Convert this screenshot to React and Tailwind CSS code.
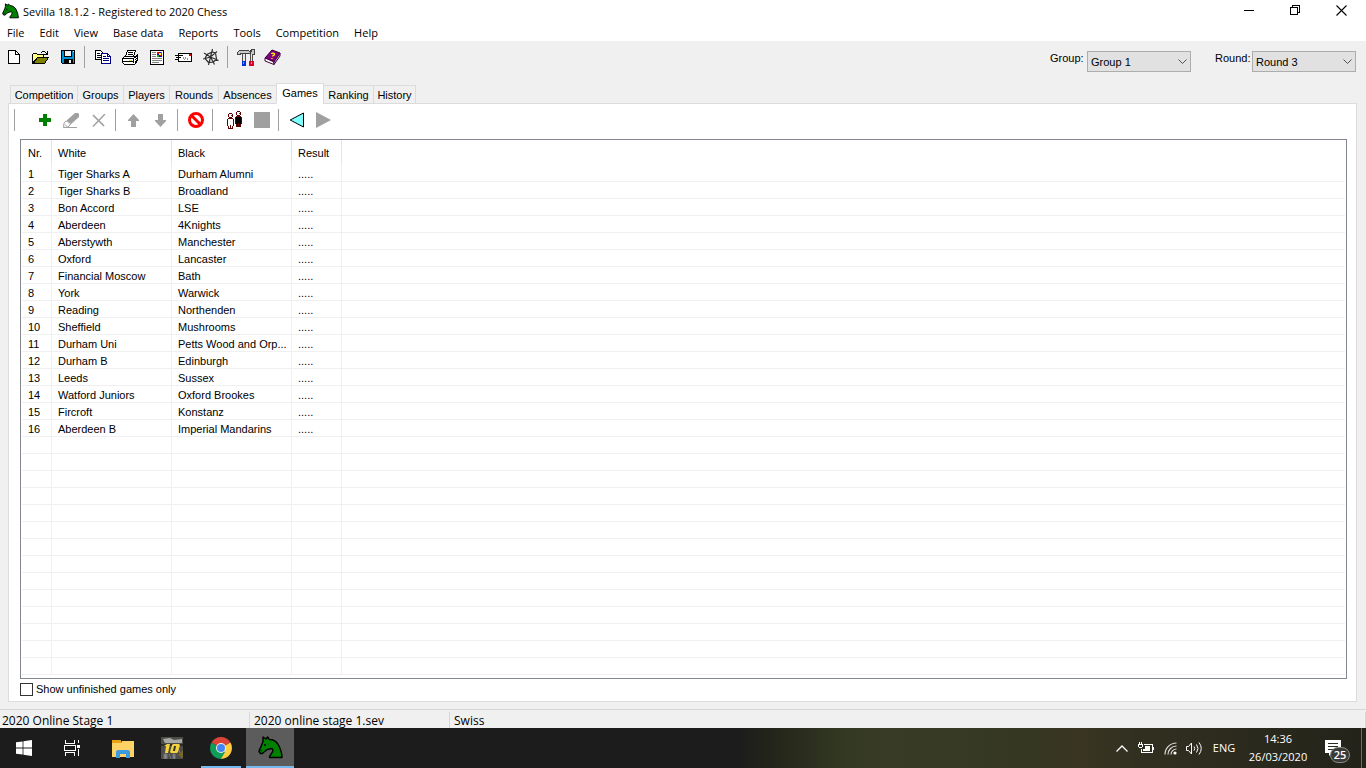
import React, { useState } from "react";

const menuItems = [
  "File",
  "Edit",
  "View",
  "Base data",
  "Reports",
  "Tools",
  "Competition",
  "Help",
];

const tabs = [
  { name: "Competition", width: "w-[68px]" },
  { name: "Groups", width: "w-[47px]" },
  { name: "Players", width: "w-[47px]" },
  { name: "Rounds", width: "w-[50px]" },
  { name: "Absences", width: "w-[59px]" },
  { name: "Games", width: "w-[48px]" },
  { name: "Ranking", width: "w-[51px]" },
  { name: "History", width: "w-[43px]" },
];

const games = [
  ["Tiger Sharks A", "Durham Alumni"],
  ["Tiger Sharks B", "Broadland"],
  ["Bon Accord", "LSE"],
  ["Aberdeen", "4Knights"],
  ["Aberstywth", "Manchester"],
  ["Oxford", "Lancaster"],
  ["Financial Moscow", "Bath"],
  ["York", "Warwick"],
  ["Reading", "Northenden"],
  ["Sheffield", "Mushrooms"],
  ["Durham Uni", "Petts Wood and Orp..."],
  ["Durham B", "Edinburgh"],
  ["Leeds", "Sussex"],
  ["Watford Juniors", "Oxford Brookes"],
  ["Fircroft", "Konstanz"],
  ["Aberdeen B", "Imperial Mandarins"],
];

// The grid lines go on below the last game
const emptyRows = Array.from({ length: 14 });

const Knight = ({ className }) => (
  <svg viewBox="0 0 25 23" className={className}>
    <path
      d="M5 1l3 2 1.500-2 2 2.500c4 0 7 2 9 5.500 2 4 3.500 8 3.500 12.500H11.500c0-3 3-4 3.500-7l-1-2c-2 .8-4 .3-5.500 1.500-1.500 1.500-3 2-4 3.500H2.500L1 15.500c0-2 1.500-3 2-5C3.500 8.500 5 7 5 5z"
      fill="#008000"
      stroke="#000"
      strokeWidth="1.400"
      strokeLinejoin="round"
    />
    <path d="M6 9h2M2.500 14.500h1" stroke="#000" strokeWidth="1.300" />
  </svg>
);

const NewIcon = () => (
  <svg width="12" height="14" viewBox="0 0 12 14" shapeRendering="crispEdges">
    <path d="M.5.5h7l4 4v9H.5z" fill="#fff" stroke="#000" />
    <path d="M7.500.5v4h4" fill="none" stroke="#000" />
  </svg>
);

const OpenIcon = () => (
  <svg width="17" height="14" viewBox="0 0 17 14" shapeRendering="crispEdges">
    <path d="M.5 13V4.500l1-1h3l1 1h6v3h-6z" fill="#ffff80" stroke="#000" />
    <path d="M1.500 13.500l4-6h11l-4 6z" fill="#808000" stroke="#000" />
    <path
      d="M9 2h1V1h3v1h1v1h1V1h1v4h-4V4h2V3h-1V2h-3v1H9z"
      fill="#000"
    />
  </svg>
);

const SaveIcon = () => (
  <svg width="14" height="14" viewBox="0 0 14 14" shapeRendering="crispEdges">
    <path d="M0 0h14v14H1l-1-1z" fill="#000" />
    <path d="M1 1h12v12H1z" fill="#0094d4" />
    <path d="M3 0h8v7H3zM3 9h9v5H3z" fill="#000" />
    <path d="M4 1h6v5H4zM8 10h2v3H8zM12 1h1v1h-1z" fill="#f0f0f0" />
  </svg>
);

const CopyIcon = () => (
  <svg width="16" height="14" viewBox="0 0 16 14" shapeRendering="crispEdges">
    <path d="M.5.5h5l2 2v7h-7z" fill="#fff" stroke="#000" />
    <path d="M2 3.500h3M2 5.500h4M2 7.500h4" stroke="#000" />
    <path d="M6.500 3.500h6l3 3v7h-9z" fill="#fff" stroke="#000080" />
    <path d="M12.500 3.500v3h3" fill="none" stroke="#000080" />
    <path d="M8 6.500h3M8 8.500h6M8 10.500h6" stroke="#000080" />
  </svg>
);

const PrintIcon = () => (
  <svg width="16" height="15" viewBox="0 0 16 15" shapeRendering="crispEdges">
    <path d="M3.500 6.500l2-6h8l-2 6z" fill="#fff" stroke="#000" />
    <path d="M6 2.500h5M5.500 4.500h5" stroke="#000" />
    <path d="M.5 8.500l2-2h11l2-2v6l-3 4H2.500l-2-2z" fill="#fff" stroke="#000" />
    <path d="M.5 8.500h11v4M1 11.500h11M11.500 8.500l4-3" fill="none" stroke="#000" />
    <path d="M13 7h1v1h-1zM14 8h1v1h-1zM13 9h1v1h-1zM14 10h1v1h-1zM13 11h1v1h-1z" fill="#000" />
    <path d="M7 10h3v1H7z" fill="#e0e000" />
  </svg>
);

const PreviewIcon = () => (
  <svg width="14" height="15" viewBox="0 0 14 15" shapeRendering="crispEdges">
    <path d="M.5.5h13v14H.5z" fill="#fff" stroke="#000" />
    <path
      d="M2 2.500h4M2 4.500h4M2 6.500h4M2 8.500h10M2 10.500h10M2 12.500h7"
      stroke="#808080"
    />
    <path d="M7 2h5v5H7z" fill="#0000ff" />
    <path d="M7 2h2v2H7zM10 4h2v2h-2z" fill="#ff0000" />
    <path d="M9 3h2v2H9z" fill="#ffff00" />
    <path d="M7 5h2v2H7z" fill="#00c000" />
    <path d="M11 2h1v2h-1z" fill="#ff00ff" />
  </svg>
);

const MailIcon = () => (
  <svg width="17" height="11" viewBox="0 0 17 11" shapeRendering="crispEdges">
    <path d="M3.500 1.500h13v8h-13z" fill="#fff" stroke="#000" />
    <path d="M0 3.500h8M1 5.500h5M0 7.500h4" stroke="#000" />
    <path d="M8 5h1v2H8zM9 7h1v1H9zM10 5h1v2h-1zM12 6h1v2h-1z" fill="#909090" />
    <path d="M14 2h2v2h-2z" fill="#e00000" />
  </svg>
);

const WebIcon = () => (
  <svg width="16" height="16" viewBox="0 0 16 16">
    <path
      d="M9.500 0L7.500 8l-2 8M1 4l6.500 4 8 3.500M0 10l7.500-2L14 2.500M7.500 8l4 7.500M9 3L4 5.500 2 9.500 5.500 13.500l5-.5 3-3L12.500 4z"
      fill="none"
      stroke="#303030"
      strokeWidth="1.200"
    />
  </svg>
);

const ToolsIcon = () => (
  <svg width="18" height="17" viewBox="0 0 18 17" shapeRendering="crispEdges">
    <path d="M0 3l2-2h9l2 2 1-3h4v6h-4l-1-1H5L3 6H0z" fill="#404040" />
    <path d="M1 3l2-1h8l2 2 2-2V1h2v4h-2l-2-1H4L2 5H1z" fill="#c8c8c8" />
    <path d="M5 5h4v7H5zM13 5h3v7h-3z" fill="#505050" />
    <path d="M6 5h2v7H6zM14 5h1v7h-1z" fill="#e8e8e8" />
    <path d="M5 12h4v5H5z" fill="#0030e0" />
    <path d="M12 12h5v5h-5z" fill="#e0002c" />
    <path d="M6 13h1v2H6z" fill="#60b0ff" />
    <path d="M14 13h1v2h-1z" fill="#ff90a0" />
  </svg>
);

const BookIcon = () => (
  <svg width="17" height="16" viewBox="0 0 17 16">
    <path d="M1 9l7-8 8 3-6 9z" fill="#800080" stroke="#300030" />
    <path d="M1 9v3l9 3.500V13z" fill="#fff" stroke="#400040" />
    <path d="M10 13l6-9v3l-6 8.500z" fill="#d0b0d0" stroke="#400040" />
    <path
      d="M7.500 5c.5-1.500 3.500-1 3 .5-.3 1-1.800.8-2 2M8 9v1"
      fill="none"
      stroke="#ffff00"
      strokeWidth="1.300"
    />
  </svg>
);

const PlusIcon = () => (
  <svg width="12" height="12" viewBox="0 0 12 12" shapeRendering="crispEdges">
    <path d="M4 0h4v4h4v4H8v4H4V8H0V4h4z" fill="#008000" />
  </svg>
);

const PencilIcon = () => (
  <svg width="17" height="17" viewBox="0 0 17 17">
    <path d="M3 9L12 1h3l1 1v3l-9 8z" fill="#a0a0a0" />
    <path d="M3 9l-2 2-.5 4.500L5 15l2.500-2.500" fill="none" stroke="#a0a0a0" />
    <path d="M2 12.500l2 2M1 15.500h13" stroke="#a0a0a0" fill="none" />
    <path d="M4 10l3 2" stroke="#fff" />
  </svg>
);

const DeleteIcon = () => (
  <svg width="14" height="13" viewBox="0 0 14 13">
    <path d="M1 1l11 11" stroke="#a0a0a0" strokeWidth="1.700" />
    <path d="M13 0L1 12.500" stroke="#a0a0a0" strokeWidth="1.400" />
  </svg>
);

const ArrowIcon = ({ down }) => (
  <svg
    width="11"
    height="13"
    viewBox="0 0 11 13"
    className={down ? "rotate-180" : ""}
  >
    <path d="M5.500 0L11 6v1H8v6H3V7H0V6z" fill="#a0a0a0" />
  </svg>
);

const ForbidIcon = () => (
  <svg width="16" height="16" viewBox="0 0 16 16">
    <circle cx="8" cy="8" r="6.500" fill="#fff" stroke="#f00" strokeWidth="3" />
    <path d="M3.500 3.500l9 9" stroke="#f00" strokeWidth="3" />
  </svg>
);

// White and black player side by side
const PlayersIcon = () => (
  <svg width="15" height="18" viewBox="0 0 15 18" shapeRendering="crispEdges">
    <path d="M9 5h5v1h1v7h-1v3H9v-3H8V6h1z" fill="#600000" />
    <path d="M9 6h5v7h-1v2h-1v-3h-1v3h-1v-2H9z" fill="#000" />
    <path d="M10 0h3v1h1v3h-1v1h-3V4H9V1h1z" fill="#600000" />
    <path d="M10 1h3v3h-3z" fill="#fff" />
    <path d="M1 7h5v1h1v7H6v3H1v-3H0V8h1z" fill="#600000" />
    <path d="M1 8h5v7H5v2H4v-3H3v3H2v-2H1z" fill="#fff" />
    <path d="M2 2h3v1h1v3H5v1H2V6H1V3h1z" fill="#600000" />
    <path d="M2 3h3v3H2z" fill="#fff" />
    <path d="M4 4h1v1H4zM12 2h1v1h-1z" fill="#c000c0" />
  </svg>
);

const StopIcon = () => (
  <svg width="16" height="16" viewBox="0 0 16 16">
    <path d="M0 0h16v16H0z" fill="#a0a0a0" />
  </svg>
);

const PreviousIcon = () => (
  <svg width="16" height="16" viewBox="0 0 16 16">
    <path d="M1.200 8L14.500 1v14z" fill="#80ffff" stroke="#000" />
  </svg>
);

const NextIcon = () => (
  <svg width="16" height="16" viewBox="0 0 16 16">
    <path d="M0 0l15 8-15 8z" fill="#a0a0a0" />
  </svg>
);

const ToolButton = ({ label, disabled, children }) => (
  <button
    type="button"
    aria-label={label}
    disabled={disabled}
    className="w-[27px] h-7 flex items-center justify-center shrink-0"
  >
    {children}
  </button>
);

const Separator = ({ className = "ml-[3px] mr-1 bg-[#a0a0a0]" }) => (
  <div className={`w-px h-[22px] shrink-0 ${className}`}></div>
);

const TitleBar = () => (
  <header className="h-6 flex items-center bg-white pl-0.5 text-[11px]">
    <Knight className="w-[17px] h-4 mr-1 mb-0.5" />
    <h1 className="flex-1">Sevilla 18.1.2 - Registered to 2020 Chess</h1>
    <div className="flex self-start pr-0.5">
      <button type="button" aria-label="Minimize" className="w-[46px] h-5 flex items-center justify-center">
        <svg width="10" height="10" viewBox="0 0 10 10" shapeRendering="crispEdges">
          <path d="M0 5.500h10" stroke="#000" />
        </svg>
      </button>
      <button type="button" aria-label="Restore" className="w-[46px] h-5 flex items-center justify-center">
        <svg width="10" height="10" viewBox="0 0 10 10" shapeRendering="crispEdges">
          <path d="M.5 2.500h7v7h-7zM2.500 2.500v-2h7v7h-2" fill="none" stroke="#000" />
        </svg>
      </button>
      <button type="button" aria-label="Close" className="w-[46px] h-5 flex items-center justify-center">
        <svg width="11" height="11" viewBox="0 0 11 11">
          <path d="M.5.5l10 10M10.500.5l-10 10" stroke="#000" strokeWidth="1.100" />
        </svg>
      </button>
    </div>
  </header>
);

const PickList = ({ id, label, value }) => (
  <div className="flex items-start gap-px">
    <label htmlFor={id} className="w-9 leading-[14px]">
      {label}
    </label>
    <div className="relative w-[104px]">
      <select
        id={id}
        defaultValue={value}
        className="appearance-none block w-full h-[21px] pt-px pl-[3px] bg-[#e1e1e1] border border-[#adadad] text-black"
      >
        <option>{value}</option>
      </select>
      <svg
        viewBox="0 0 9 5"
        className="absolute right-1 top-2 w-[9px] h-[5px] pointer-events-none"
      >
        <path d="M.5.5l4 4 4-4" fill="none" stroke="#505050" />
      </svg>
    </div>
  </div>
);

const MainToolbar = () => (
  <div className="flex items-start justify-between pt-[2px] h-[42px]">
    <div className="flex items-center">
      <ToolButton label="New"><NewIcon /></ToolButton>
      <ToolButton label="Open"><OpenIcon /></ToolButton>
      <ToolButton label="Save"><SaveIcon /></ToolButton>
      <Separator />
      <ToolButton label="Copy"><CopyIcon /></ToolButton>
      <ToolButton label="Print"><PrintIcon /></ToolButton>
      <ToolButton label="Preview"><PreviewIcon /></ToolButton>
      <ToolButton label="Mail"><MailIcon /></ToolButton>
      <ToolButton label="Web"><WebIcon /></ToolButton>
      <Separator />
      <ToolButton label="Options"><ToolsIcon /></ToolButton>
      <ToolButton label="Help"><BookIcon /></ToolButton>
    </div>
    <div className="flex gap-6 pt-2 pr-[10px]">
      <PickList id="group" label="Group:" value="Group 1" />
      <PickList id="round" label="Round:" value="Round 3" />
    </div>
  </div>
);

const GamesToolbar = () => (
  <div className="flex items-center pt-[2px] pl-[5px]">
    <Separator className="mr-4 bg-[#a0a0a0]" />
    <ToolButton label="Add"><PlusIcon /></ToolButton>
    <ToolButton label="Edit" disabled><PencilIcon /></ToolButton>
    <ToolButton label="Delete" disabled><DeleteIcon /></ToolButton>
    <Separator />
    <ToolButton label="Move up" disabled><ArrowIcon /></ToolButton>
    <ToolButton label="Move down" disabled><ArrowIcon down /></ToolButton>
    <Separator />
    <ToolButton label="Clear"><ForbidIcon /></ToolButton>
    <Separator className="ml-[3px] mr-2 bg-[#a0a0a0]" />
    <ToolButton label="Pair players"><PlayersIcon /></ToolButton>
    <ToolButton label="Stop" disabled><StopIcon /></ToolButton>
    <Separator />
    <ToolButton label="Previous round"><PreviousIcon /></ToolButton>
    <ToolButton label="Next round" disabled><NextIcon /></ToolButton>
  </div>
);

const GamesTable = () => {
  const head = "h-[25px] pt-px pl-[6px] font-normal border-r border-[#e5e5e5]";
  const cell = "h-[17px] pt-[2px] pl-[6px] border-r border-b border-[#f0f0f0]";

  return (
    <div className="flex-1 min-h-0 overflow-hidden ml-[11px] mr-[9px] pl-px pr-px border border-[#828790]">
      <table className="w-full table-fixed border-separate border-spacing-0 text-left leading-[14px] whitespace-nowrap">
        <colgroup>
          <col className="w-[30px]" />
          <col className="w-[120px]" />
          <col className="w-[120px]" />
          <col className="w-[50px]" />
          <col />
        </colgroup>
        <thead>
          <tr>
            <th className={head}>Nr.</th>
            <th className={head}>White</th>
            <th className={head}>Black</th>
            <th className={head}>Result</th>
            <th></th>
          </tr>
        </thead>
        <tbody>
          {games.map(([white, black], index) => (
            <tr key={white}>
              <td className={cell}>{index + 1}</td>
              <td className={cell}>{white}</td>
              <td className={cell}>{black}</td>
              <td className={cell}>.....</td>
              <td className="border-b border-[#f0f0f0]"></td>
            </tr>
          ))}
          {emptyRows.map((_, index) => (
            <tr key={index}>
              <td className={cell}></td>
              <td className={cell}></td>
              <td className={cell}></td>
              <td className={cell}></td>
              <td className="border-b border-[#f0f0f0]"></td>
            </tr>
          ))}
        </tbody>
      </table>
    </div>
  );
};

const StatusBar = () => (
  <footer className="h-[19px] flex border-t border-[#d7d7d7] pt-[2px] text-[12px] leading-[18px]">
    <div className="w-[250px] pl-0.5 border-r border-[#d7d7d7]">2020 Online Stage 1</div>
    <div className="w-[200px] pl-1 border-r border-[#d7d7d7]">2020 online stage 1.sev</div>
    <div className="flex-1 pl-1 border-r border-[#d7d7d7]">Swiss</div>
  </footer>
);

const TaskButton = ({ label, className = "w-[49px]", children }) => (
  <button
    type="button"
    aria-label={label}
    className={`h-full flex flex-col items-center shrink-0 ${className}`}
  >
    {children}
  </button>
);

const Taskbar = () => (
  <nav className="h-10 shrink-0 flex bg-[linear-gradient(90deg,#1c1c1c_0%,#1c1c1c_54%,#25271a_57%,#343924_62%,#383c25_65%,#353722_75%,#393522_79%,#302f20_84%,#24231a_100%)] text-white text-[11px]">
    <TaskButton label="Start" className="w-12 justify-center">
      <svg width="16" height="16" viewBox="0 0 16 16">
        <path d="M0 2.300L6.600 1.400v6.200H0zM7.400 1.300L16 0v7.600H7.400zM0 8.400h6.600v6.200L0 13.700zM7.400 8.400H16V16l-8.600-1.300z" fill="#fff" />
      </svg>
    </TaskButton>
    <TaskButton label="Task view" className="w-12 justify-center mr-[3px]">
      <svg width="16" height="16" viewBox="0 0 16 16" shapeRendering="crispEdges">
        <path d="M1.500 0v3.500h9V0M1.500 16v-3.500h9V16M.5 5.500h11v5H.5zM14.500 0v3M14.500 9v7" fill="none" stroke="#fff" />
        <path d="M13 5h3v3h-3z" fill="#fff" />
      </svg>
    </TaskButton>
    <TaskButton label="File Explorer" className="w-12 justify-center">
      <svg width="22" height="19" viewBox="0 0 22 19">
        <path d="M0 1h9v3H0z" fill="#e8a317" />
        <path d="M0 4h9l1-2h12v16H0z" fill="#fdd365" />
        <path d="M4 19v-7l2-1h10l2 1v7h-4v-4H8v4z" fill="#3c9be0" />
      </svg>
    </TaskButton>
    <TaskButton label="Game" className="w-[49px] justify-center">
      <svg width="22" height="22" viewBox="0 0 22 22">
        <path d="M0 0h22v22H0z" fill="#4c4c48" />
        <path d="M2 2l7-1 4 2 8-1v4H4z" fill="#a8a8a4" />
        <path d="M0 7h22v2H0z" fill="#2a2a2a" />
        <path d="M3 17h3v5H3zM8 17l2 5M12 17h2v5h-2zM18 13l3 8" fill="#888" stroke="#777" />
        <path d="M17 18l5-5v8z" fill="#76672b" />
        <path d="M6 7h3l-2 9H4l1-7H3z" fill="#f3d23c" />
        <path d="M11 8l1-1h6l1 1-2 7-1 1h-6l-1-1z" fill="#f3d23c" />
        <path d="M13 9h2l-1 5h-2z" fill="#333" />
      </svg>
    </TaskButton>
    <TaskButton label="Chrome" className="w-[49px] pt-[9px] justify-between">
      <svg width="22" height="22" viewBox="0 0 22 22">
        <path d="M11 11L1.500 5.500A11 11 0 0 1 20.500 5.500z" fill="#db4437" />
        <path d="M11 11L20.500 5.500A11 11 0 0 1 11 22z" fill="#ffcd40" />
        <path d="M11 11L1.500 5.500A11 11 0 0 0 11 22l4-7z" fill="#0f9d58" />
        <circle cx="11" cy="11" r="5" fill="#f1f1f1" />
        <circle cx="11" cy="11" r="4" fill="#4285f4" />
      </svg>
      <span className="w-10 h-[2px] bg-[#76b9ed]"></span>
    </TaskButton>
    <TaskButton label="Sevilla" className="w-12 ml-px pt-2 justify-between bg-[#5c5c5c]">
      <Knight className="w-[25px] h-[23px]" />
      <span className="w-full h-[2px] bg-[#76b9ed]"></span>
    </TaskButton>

    <div className="ml-auto flex items-center">
      <button type="button" aria-label="Show hidden icons" className="w-6 flex justify-center">
        <svg width="12" height="7" viewBox="0 0 12 7">
          <path d="M.5 6.500L6 1l5.500 5.500" fill="none" stroke="#fff" strokeWidth="1.300" />
        </svg>
      </button>
      <button type="button" aria-label="Battery" className="w-6 flex justify-center">
        <svg width="16" height="12" viewBox="0 0 16 12" shapeRendering="crispEdges">
          <path d="M6 2.500h8.500v8H3.500V7M15.500 5v3M1.500 0v2M3.500 0v2" fill="none" stroke="#fff" />
          <path d="M.5 2.500h4v2l-1 1h-2l-1-1z" fill="none" stroke="#fff" />
          <path d="M7 4h5v5H5V7h2z" fill="#fff" />
        </svg>
      </button>
      <button type="button" aria-label="Network" className="w-6 flex justify-center">
        <svg width="13" height="13" viewBox="0 0 13 13">
          <path d="M1 12.500A11.500 11.500 0 0 1 12.500 1M4 12.500A8.500 8.500 0 0 1 12.500 4M7 12.500A5.500 5.500 0 0 1 12.500 7" fill="none" stroke="#ddd" strokeWidth="1.200" />
          <circle cx="11" cy="11" r="1.600" fill="#fff" />
        </svg>
      </button>
      <button type="button" aria-label="Volume" className="w-6 flex justify-center">
        <svg width="17" height="13" viewBox="0 0 17 13">
          <path d="M.5 4.500h2l3-3.500v11l-3-3.500h-2zM8 4.500q1.500 2 0 4M10.500 2.500q3 4 0 8M13 .5q4.500 6 0 12" fill="none" stroke="#fff" />
        </svg>
      </button>
      <button type="button" className="w-9">ENG</button>
      <div className="w-[72px] text-center leading-[18px]">
        <div>14:36</div>
        <div>26/03/2020</div>
      </div>
      <button type="button" aria-label="Notifications" className="relative w-[47px] h-10">
        <svg width="16" height="16" viewBox="0 0 16 16" className="absolute left-[11px] top-3">
          <path d="M0 0h16v13h-9l-3 3v-3H0z" fill="#fff" />
          <path d="M3 3.500h10M3 6.500h10M3 9.500h6" stroke="#2b2a1e" />
        </svg>
        <span className="absolute left-[16px] top-[19px] w-5 h-4 rounded-full border border-[#8a8a86] bg-[#3a3a36] text-[11px] leading-[14px] font-semibold">
          25
        </span>
      </button>
      <div className="w-px h-10 bg-[#6b6b62] mr-1"></div>
    </div>
  </nav>
);

const App = () => {
  const [activeTab, setActiveTab] = useState("Games");
  const [unfinishedOnly, setUnfinishedOnly] = useState(false);

  return (
    <div className="h-screen flex flex-col overflow-hidden bg-[#f0f0f0] text-black font-['Open_Sans','Noto_Sans',sans-serif]">
      <TitleBar />
      <nav className="flex gap-px h-[17px] bg-white text-[11px] leading-[17px]">
        {menuItems.map((item) => (
          <button key={item} type="button" className="px-[7px]">
            {item}
          </button>
        ))}
      </nav>

      <div className="flex-1 min-h-0 flex flex-col font-['Liberation_Sans',Arial,sans-serif] text-[11px]">
        <MainToolbar />

        <main className="flex-1 min-h-0 flex flex-col pl-2 pr-[9px] pb-[7px]">
          <div role="tablist" className="flex items-end h-[21px] pl-[2px] -mb-px z-10">
            {tabs.map(({ name, width }) => (
              <button
                key={name}
                type="button"
                role="tab"
                aria-selected={activeTab === name}
                onClick={() => setActiveTab(name)}
                className={`-mr-px border border-[#dcdcdc] ${width} ${
                  activeTab === name
                    ? "h-[21px] pb-px bg-white border-b-white"
                    : "h-[19px] pt-px bg-[#f0f0f0]"
                }`}
              >
                {name}
              </button>
            ))}
          </div>

          <section className="flex-1 min-h-0 flex flex-col bg-white border border-[#dcdcdc]">
            <GamesToolbar />
            <div className="h-[5px] shrink-0"></div>
            <GamesTable />
            <label className="flex items-center gap-[3px] h-[22px] pb-[2px] pl-[11px]">
              <input
                type="checkbox"
                checked={unfinishedOnly}
                onChange={(e) => setUnfinishedOnly(e.target.checked)}
                className="appearance-none w-[13px] h-[13px] border border-[#333] bg-white checked:bg-[#333]"
              />
              Show unfinished games only
            </label>
          </section>
        </main>
      </div>

      <StatusBar />
      <Taskbar />
    </div>
  );
};

export default App;
